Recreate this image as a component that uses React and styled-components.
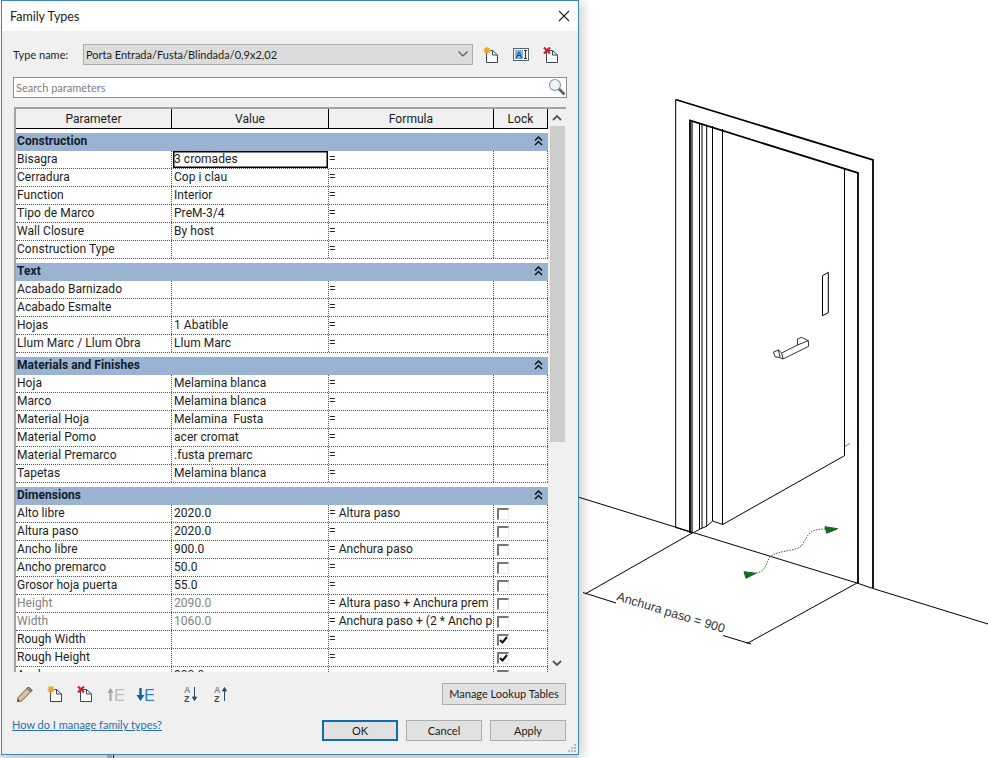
import React from 'react';
import styled, { createGlobalStyle } from 'styled-components';

const GlobalStyle = createGlobalStyle`
  html, body { margin: 0; padding: 0; background: #fff; overflow: hidden; }
  * { box-sizing: border-box; }
`;

const Desktop = styled.div`
  position: relative;
  width: 988px;
  height: 758px;
  overflow: hidden;
  background: #fff;
  font-family: Lato, "Open Sans", sans-serif;
  font-size: 11px;
  color: #1c1c1c;
`;

const Drawing = styled.svg`
  position: absolute;
  left: 0;
  top: 0;
`;

const Dialog = styled.div`
  position: absolute;
  left: 1px;
  top: 0;
  width: 578px;
  height: 755px;
  display: flex;
  flex-direction: column;
  background: #f0f0f0;
  border: 1px solid #3d85bd;
  box-shadow: 5px 2px 10px rgba(0, 0, 0, 0.16);
`;

const TitleBar = styled.div`
  height: 30px;
  flex: none;
  display: flex;
  align-items: center;
  justify-content: space-between;
  padding: 0 8px 0 8px;
  background: #fff;
  font-size: 12.5px;
`;

const Body = styled.div`
  flex: 1;
  display: flex;
  flex-direction: column;
  padding: 13px 12px 0 11px;
  min-height: 0;
`;

const TypeRow = styled.div`
  display: flex;
  align-items: center;
  height: 21px;
`;

const TypeLabel = styled.span`
  width: 70px;
  flex: none;
  padding-bottom: 1px;
`;

const Combo = styled.div`
  width: 390px;
  height: 21px;
  display: flex;
  align-items: center;
  justify-content: space-between;
  padding: 0 4px 1px 2px;
  background: #dcdcdc;
  border: 1px solid #adadad;
`;

const TypeIcons = styled.div`
  display: flex;
  align-items: center;
  gap: 14px;
  margin-left: 10px;
`;

const SearchBox = styled.div`
  height: 21px;
  margin: 12px -1px 0 0;
  display: flex;
  align-items: center;
  justify-content: space-between;
  padding: 0 0 1px 2px;
  background: #fff;
  border: 1px solid #8e8e8e;
  color: #7d7d7d;
`;

const TableFrame = styled.div`
  height: 565px;
  margin: 9px 0 0 1px;
  flex: none;
  display: flex;
  border-top: 2px solid #a3a3a3;
  border-left: 2px solid #a3a3a3;
  background: #fff;
  overflow: hidden;
  font-family: Roboto, "Open Sans", sans-serif;
  font-size: 12px;
  letter-spacing: 0.05px;
`;

const TableMain = styled.div`
  width: 532px;
  flex: none;
  display: flex;
  flex-direction: column;
  min-height: 0;
`;

const COLUMNS = '156px 157px 165px 54px';

const HeaderRow = styled.div`
  display: grid;
  grid-template-columns: ${COLUMNS};
  height: 20px;
  flex: none;
  background: #f0f0f0;
  border-bottom: 1px solid #000;
`;

const HeaderCell = styled.div`
  display: flex;
  align-items: center;
  justify-content: center;
  border-right: 1px solid #000;
`;

const Rows = styled.div`
  flex: 1;
  min-height: 0;
  overflow: hidden;
`;

const SectionHeader = styled.div`
  height: 18px;
  margin-top: 4px;
  display: flex;
  align-items: center;
  justify-content: space-between;
  padding: 0 5px 2px 1px;
  background: #9ab3d0;
  color: #111c2b;
  font-weight: 700;
`;

const Row = styled.div`
  display: grid;
  grid-template-columns: ${COLUMNS};
  height: 18px;
  border-bottom: 1px dotted #555;
`;

const Cell = styled.div`
  display: flex;
  align-items: center;
  padding-left: ${(p) => p.$pad}px;
  padding-bottom: 2px;
  border-right: 1px dotted #555;
  color: ${(p) => (p.$muted ? '#828282' : '#1c1c1c')};
  white-space: pre;
  overflow: hidden;
`;

const ActiveCell = styled(Cell)`
  border: 1px solid #000;
  box-shadow: inset 0 0 0 0.5px #000;
  margin-left: 1px;
  margin-right: 1px;
  padding-left: 0;
`;

const LockCell = styled(Cell)`
  padding-bottom: 0;
`;

const Check = styled.span`
  width: 12px;
  height: 12px;
  margin-left: 3px;
  display: flex;
  align-items: center;
  justify-content: center;
  border-style: solid;
  border-width: 2px 1px 1px 2px;
  border-color: #777 #ececec #ececec #777;
  background: #fff;
`;

const ScrollBar = styled.div`
  width: 18px;
  flex: none;
  display: flex;
  flex-direction: column;
  background: #f0f0f0;
`;

const ScrollArrow = styled.div`
  height: 17px;
  flex: none;
  display: flex;
  align-items: center;
  justify-content: center;
`;

const ScrollTrack = styled.div`
  flex: 1;
  padding: 0 1px 0 2px;
`;

const ScrollThumb = styled.div`
  height: 316px;
  background: #cdcdcd;
`;

const ToolRow = styled.div`
  height: 22px;
  margin-top: 11px;
  flex: none;
  display: flex;
  align-items: center;
  justify-content: space-between;
`;

const ToolGroup = styled.div`
  display: flex;
  align-items: center;
  gap: 12px;
  padding-left: 3px;
`;

const ToolSlot = styled.div`
  width: 18px;
  height: 18px;
  flex: none;
  margin-left: ${(p) => p.$gap || 0}px;
  display: flex;
  align-items: center;
  justify-content: center;
`;

const Button = styled.div`
  width: ${(p) => p.$width || 76}px;
  height: ${(p) => p.$height || 21}px;
  display: flex;
  align-items: center;
  justify-content: center;
  padding-bottom: 1px;
  white-space: nowrap;
  background: #e1e1e1;
  border: ${(p) => (p.$primary ? '2px solid #0f6cb0' : '1px solid #adadad')};
`;

const FooterRow = styled.div`
  height: 21px;
  margin-top: 15px;
  flex: none;
  display: flex;
  justify-content: space-between;
`;

const HelpLink = styled.a`
  margin-top: -2px;
  margin-left: -1px;
  color: #2a6fa8;
  text-decoration: underline;
`;

const FooterButtons = styled.div`
  display: flex;
  gap: 8px;
`;

const Grip = styled.svg`
  position: absolute;
  right: 1px;
  bottom: 1px;
`;

const sections = [
  {
    name: 'Construction',
    rows: [
      ['Bisagra', '3 cromades', '='],
      ['Cerradura', 'Cop i clau', '='],
      ['Function', 'Interior', '='],
      ['Tipo de Marco', 'PreM-3/4', '='],
      ['Wall Closure', 'By host', '='],
      ['Construction Type', '', '='],
    ],
  },
  {
    name: 'Text',
    rows: [
      ['Acabado Barnizado', '', '='],
      ['Acabado Esmalte', '', '='],
      ['Hojas', '1 Abatible', '='],
      ['Llum Marc / Llum Obra', 'Llum Marc', '='],
    ],
  },
  {
    name: 'Materials and Finishes',
    rows: [
      ['Hoja', 'Melamina blanca', '='],
      ['Marco', 'Melamina blanca', '='],
      ['Material Hoja', 'Melamina  Fusta', '='],
      ['Material Pomo', 'acer cromat', '='],
      ['Material Premarco', '.fusta premarc', '='],
      ['Tapetas', 'Melamina blanca', '='],
    ],
  },
  {
    name: 'Dimensions',
    rows: [
      ['Alto libre', '2020.0', '= Altura paso', 'off'],
      ['Altura paso', '2020.0', '=', 'off'],
      ['Ancho libre', '900.0', '= Anchura paso', 'off'],
      ['Ancho premarco', '50.0', '=', 'off'],
      ['Grosor hoja puerta', '55.0', '=', 'off'],
      ['Height', '2090.0', '= Altura paso + Anchura prem', 'off', true],
      ['Width', '1060.0', '= Anchura paso + (2 * Ancho p', 'off', true],
      ['Rough Width', '', '=', 'on'],
      ['Rough Height', '', '=', 'on'],
      ['Ancho', '900.0', '=', 'off'],
    ],
  },
];

const Chevrons = () => (
  <svg width="9" height="10" viewBox="0 0 9 10" fill="none" stroke="#111" strokeWidth="1.5">
    <path d="M1 4.5 L4.5 1 L8 4.5" />
    <path d="M1 9 L4.5 5.5 L8 9" />
  </svg>
);

const PageIcon = ({ mark }) => (
  <svg width="16" height="16" viewBox="0 0 16 16" fill="none">
    <path d="M3.5 3.5 H9.5 L14.5 8 V15.5 H3.5 Z" fill="#fcfcfc" stroke="#3c4650" />
    <path d="M9.5 3.5 V8 H14.5" stroke="#3c4650" />
    {mark === 'add' ? (
      <g stroke="#f0a020" strokeWidth="1.4">
        <path d="M4 0 V7 M0.5 3.5 H7.5 M1.5 1 L6.5 6 M6.5 1 L1.5 6" />
      </g>
    ) : (
      <g stroke="#c8222e" strokeWidth="2.2">
        <path d="M1 0.5 L7 6.5 M7 0.5 L1 6.5" />
      </g>
    )}
  </svg>
);

const RenameIcon = () => (
  <svg width="16" height="13" viewBox="0 0 16 13">
    <rect x="0.5" y="0.5" width="15" height="12" fill="#f4f6f8" stroke="#5b6670" />
    <rect x="2" y="2" width="8" height="9" fill="#7fb4e6" />
    <text x="6" y="10" textAnchor="middle" fontFamily="Liberation Sans" fontSize="9.5" fontWeight="700" fill="#1f4a75">A</text>
    <path d="M11 2.5 H14 M12.5 2.5 V10.5 M11 10.5 H14" stroke="#333" fill="none" />
  </svg>
);

const SearchIcon = () => (
  <svg width="18" height="18" viewBox="0 0 18 18" fill="none">
    <circle cx="7" cy="7" r="5.5" fill="#eef4f8" stroke="#8b9aa3" strokeWidth="1.2" />
    <path d="M11 11 L16.5 16.5" stroke="#5a5f62" strokeWidth="2.6" />
  </svg>
);

const SortIcon = ({ up }) => (
  <svg width="14" height="18" viewBox="0 0 14 18" fill="none">
    <text x="0" y="8" fontFamily="Liberation Sans" fontSize="9" fontWeight="700" fill="#7f8d9c">A</text>
    <text x="0" y="17" fontFamily="Liberation Sans" fontSize="9" fontWeight="700" fill="#3b5068">Z</text>
    {up ? (
      <path d="M10.5 5 V16 M8.500 6 L10.500 2.500 L12.500 6 Z" stroke="#33475c" fill="#33475c" />
    ) : (
      <path d="M10.5 2 V13 M8.500 12 L10.500 15.500 L12.500 12 Z" stroke="#33475c" fill="#33475c" />
    )}
  </svg>
);

const Door = () => (
  <Drawing width="988" height="758" viewBox="0 0 988 758" fill="none">
    <rect x="0" y="754" width="578" height="4" fill="#e4e4e4" />
    <rect x="107" y="754" width="5" height="4" fill="#b5b5b5" />
    <path d="M113.500 754 V758" stroke="#222" />

    <g stroke="#000" strokeWidth="1">
      <path d="M578 497 L693 532.500 L857 583 L873 588.500 L988 624" />
      <path d="M693 532.500 L585 594" />
      <path d="M857 583 L747 643.500" />
      <path d="M583 592.500 L616 603" />
      <path d="M723 635.500 L751 644" />
      <path d="M675.700 527.500 V100" />
      <path d="M699.500 122.500 V529 M702 123 V528 M706.700 124.500 V526 M712.500 126 V521 M722.500 129 V524.500" />
      <path d="M844.500 169 V455.700" />
      <path d="M675.700 527.500 L690 532 L693 533 L700 529 L706.700 526.300 L712.700 521 L722.700 524.500 L844.500 455.700" />
      <path d="M822.500 275.700 L828.300 272.300 V312.700 L822.500 315.700 Z" />
      <path d="M773.500 352 L778.500 350 L781.700 353 L797.500 345 L797.500 339 L801.700 337.300 L808.300 340.700 L808.700 346.300 L783 359 L779.500 357.500 L775 356.700 Z" strokeWidth="0.8" />
      <path d="M781.700 353 L783 359 M797.500 345 L808.300 340.700 M778.500 350 L780 357.500" strokeWidth="0.8" />
    </g>

    <g stroke="#000" strokeWidth="1.800">
      <path d="M873 588 V160 L675.500 99.500" />
      <path d="M690 533 V120.500 L858 173 V583" />
      <path d="M692 533 V122" strokeWidth="1.200" />
    </g>

    <path d="M756 573 C764 572 766 566 769 558 C776 550 792 552 800 547 C806 542 806 534 813 531 C817 529 821 529 826 529" stroke="#1f6a2c" strokeDasharray="1.500 1.200" />
    <path d="M844.700 446.700 L850 443.300" stroke="#4a9a5a" />
    <path d="M744 571.700 L756 573.300 L746 578.300 Z" fill="#17691f" stroke="#17691f" />
    <path d="M837.700 528.700 L825 526.700 L826.700 533.300 Z" fill="#17691f" stroke="#17691f" />

    <text x="616" y="600" transform="rotate(17 616 600)" fontFamily="Liberation Sans" fontSize="12.500" fill="#333">Anchura paso = 900</text>
  </Drawing>
);

export default function App() {
  return (
    <Desktop>
      <GlobalStyle />
      <Door />
      <Dialog>
        <TitleBar>
          <span>Family Types</span>
          <svg width="12" height="12" viewBox="0 0 12 12" stroke="#222" strokeWidth="1.100">
            <path d="M1 1 L11 11 M11 1 L1 11" />
          </svg>
        </TitleBar>
        <Body>
          <TypeRow>
            <TypeLabel>Type name:</TypeLabel>
            <Combo>
              <span>Porta Entrada/Fusta/Blindada/0,9x2,02</span>
              <svg width="10" height="6" viewBox="0 0 10 6" fill="none" stroke="#555" strokeWidth="1.200">
                <path d="M0.500 0.500 L5 5 L9.500 0.500" />
              </svg>
            </Combo>
            <TypeIcons>
              <PageIcon mark="add" />
              <RenameIcon />
              <PageIcon mark="del" />
            </TypeIcons>
          </TypeRow>
          <SearchBox>
            <span>Search parameters</span>
            <SearchIcon />
          </SearchBox>
          <TableFrame>
            <TableMain>
              <HeaderRow>
                <HeaderCell>Parameter</HeaderCell>
                <HeaderCell>Value</HeaderCell>
                <HeaderCell>Formula</HeaderCell>
                <HeaderCell>Lock</HeaderCell>
              </HeaderRow>
              <Rows>
                {sections.map((section) => (
                  <div key={section.name}>
                    <SectionHeader>
                      {section.name}
                      <Chevrons />
                    </SectionHeader>
                    {section.rows.map(([param, value, formula, lock, muted]) => (
                      <Row key={param}>
                        <Cell $pad={1} $muted={muted}>{param}</Cell>
                        {param === 'Bisagra' ? <ActiveCell>{value}</ActiveCell> : <Cell $pad={2} $muted={muted}>{value}</Cell>}
                        <Cell $pad={0}>{formula}</Cell>
                        <LockCell $pad={0}>
                          {lock && (
                            <Check>
                              {lock === 'on' && (
                                <svg width="9" height="8" viewBox="0 0 9 8" fill="none" stroke="#111" strokeWidth="2">
                                  <path d="M1 4 L3.500 6.500 L8 1" />
                                </svg>
                              )}
                            </Check>
                          )}
                        </LockCell>
                      </Row>
                    ))}
                  </div>
                ))}
              </Rows>
            </TableMain>
            <ScrollBar>
              <ScrollArrow>
                <svg width="10" height="7" viewBox="0 0 10 7" fill="none" stroke="#555" strokeWidth="1.800">
                  <path d="M1 6 L5 2 L9 6" />
                </svg>
              </ScrollArrow>
              <ScrollTrack>
                <ScrollThumb />
              </ScrollTrack>
              <ScrollArrow>
                <svg width="10" height="7" viewBox="0 0 10 7" fill="none" stroke="#555" strokeWidth="1.800">
                  <path d="M1 1 L5 5 L9 1" />
                </svg>
              </ScrollArrow>
            </ScrollBar>
          </TableFrame>
          <ToolRow>
            <ToolGroup>
              <ToolSlot>
                <svg width="18" height="18" viewBox="0 0 18 18" fill="none">
                  <path d="M2 12.500 L12.500 2 L16 5.500 L5.500 16 L1.500 16.500 Z" fill="#d8c49a" stroke="#5c5a52" />
                  <path d="M12.500 2 L16 5.500 L14.500 7 L11 3.500 Z" fill="#9a9a9a" stroke="#5c5a52" />
                  <path d="M1.500 16.500 L2 14.500 L3.500 16 Z" fill="#333" />
                </svg>
              </ToolSlot>
              <ToolSlot><PageIcon mark="add" /></ToolSlot>
              <ToolSlot><PageIcon mark="del" /></ToolSlot>
              <ToolSlot>
                <svg width="18" height="18" viewBox="0 0 18 18" fill="none">
                  <path d="M4.500 16 V7" stroke="#a3a3a3" strokeWidth="2" />
                  <path d="M1.500 8 L4.500 3 L7.500 8 Z" fill="#a3a3a3" />
                  <text x="8" y="16" fontFamily="Liberation Sans" fontSize="17" fill="#bdbdbd">E</text>
                </svg>
              </ToolSlot>
              <ToolSlot>
                <svg width="18" height="18" viewBox="0 0 18 18" fill="none">
                  <path d="M4.500 3 V12" stroke="#135c9e" strokeWidth="2.400" />
                  <path d="M0.500 10 L4.500 16 L8.500 10 Z" fill="#135c9e" />
                  <text x="8" y="16" fontFamily="Liberation Sans" fontSize="17" fill="#2f86c6">E</text>
                </svg>
              </ToolSlot>
              <ToolSlot $gap={16}><SortIcon /></ToolSlot>
              <ToolSlot><SortIcon up /></ToolSlot>
            </ToolGroup>
            <Button $width={124} $height={22}>Manage Lookup Tables</Button>
          </ToolRow>
          <FooterRow>
            <HelpLink>How do I manage family types?</HelpLink>
            <FooterButtons>
              <Button $primary>OK</Button>
              <Button>Cancel</Button>
              <Button>Apply</Button>
            </FooterButtons>
          </FooterRow>
        </Body>
        <Grip width="10" height="10" viewBox="0 0 10 10" fill="#b8b8b8">
          <rect x="7" y="1" width="2" height="2" />
          <rect x="4" y="4" width="2" height="2" />
          <rect x="7" y="4" width="2" height="2" />
          <rect x="1" y="7" width="2" height="2" />
          <rect x="4" y="7" width="2" height="2" />
          <rect x="7" y="7" width="2" height="2" />
        </Grip>
      </Dialog>
    </Desktop>
  );
}
